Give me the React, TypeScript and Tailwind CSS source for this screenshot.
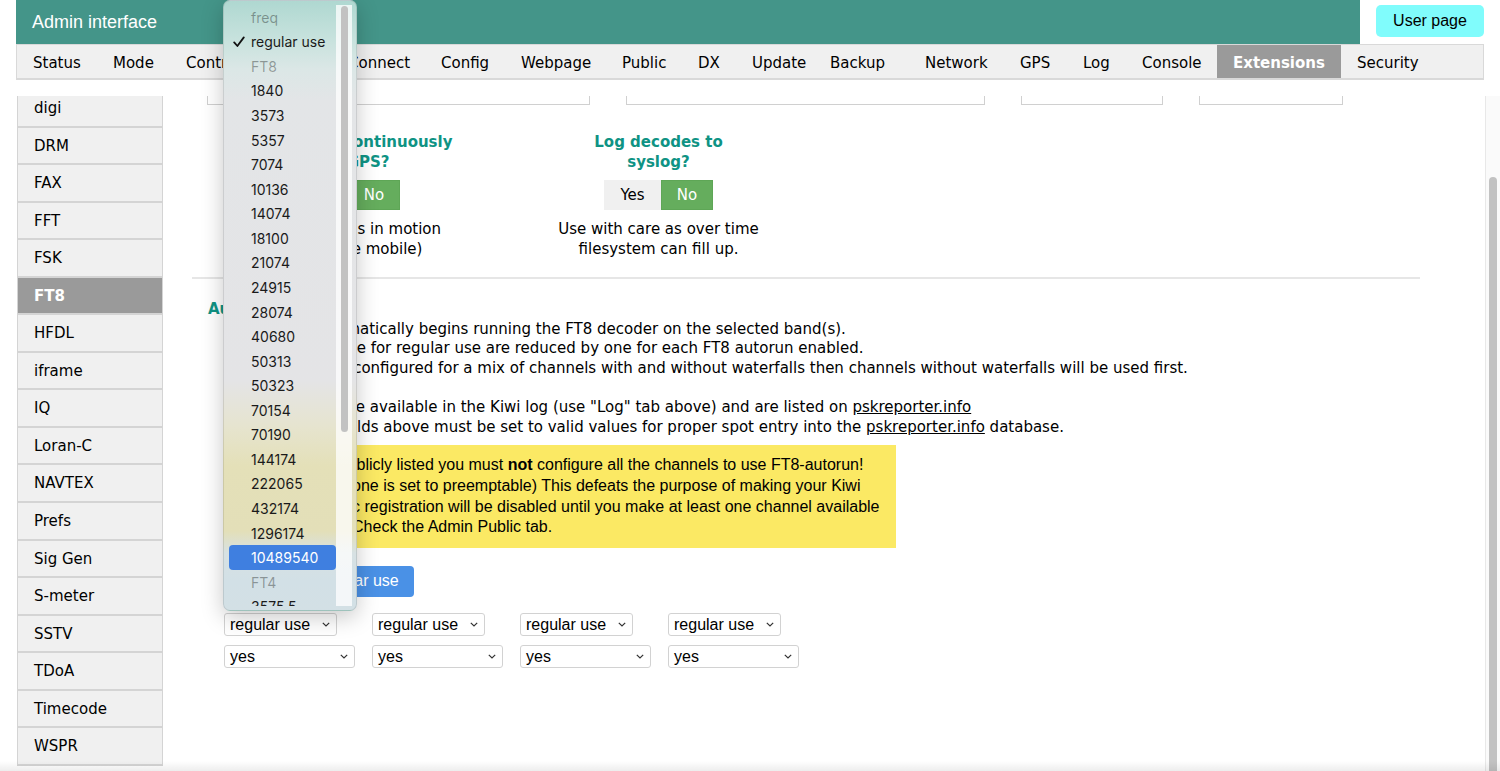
import React from 'react';

const tabs = [
  { label: 'Status', w: 80 },
  { label: 'Mode', w: 73 },
  { label: 'Control', w: 87 },
  { label: 'Users', w: 75 },
  { label: 'Connect', w: 93 },
  { label: 'Config', w: 80 },
  { label: 'Webpage', w: 101 },
  { label: 'Public', w: 76 },
  { label: 'DX', w: 54 },
  { label: 'Update', w: 78 },
  { label: 'Backup', w: 95 },
  { label: 'Network', w: 95 },
  { label: 'GPS', w: 63 },
  { label: 'Log', w: 59 },
  { label: 'Console', w: 91 },
  { label: 'Extensions', w: 124, active: true },
  { label: 'Security', w: 0 },
];

const extensions = [
  'digi', 'DRM', 'FAX', 'FFT', 'FSK', 'FT8', 'HFDL', 'iframe', 'IQ', 'Loran-C',
  'NAVTEX', 'Prefs', 'Sig Gen', 'S-meter', 'SSTV', 'TDoA', 'Timecode', 'WSPR',
];

const ft8Freqs = [
  '1840', '3573', '5357', '7074', '10136', '14074', '18100', '21074', '24915', '28074',
  '40680', '50313', '50323', '70154', '70190', '144174', '222065', '432174', '1296174', '10489540',
];

type Opt = { label: string; group?: boolean; checked?: boolean; selected?: boolean };

const options: Opt[] = [
  { label: 'freq', group: true },
  { label: 'regular use', checked: true },
  { label: 'FT8', group: true },
  ...ft8Freqs.map((f) => ({ label: f, selected: f === '10489540' })),
  { label: 'FT4', group: true },
  { label: '3575.5' },
];

function Chevron() {
  return (
    <svg width="8" height="5" viewBox="0 0 8 5" className="shrink-0">
      <path d="M0.8 0.8 L4 4 L7.2 0.8" fill="none" stroke="#333" strokeWidth="1.2" />
    </svg>
  );
}

function FakeSelect({ value, width }: { value: string; width: string }) {
  return (
    <div className={`${width} flex h-[23px] items-center justify-between rounded-[3px] border border-[#d2d2d2] bg-white pl-[5px] pr-[6px] pt-[1px] text-[16px]`}>
      <span>{value}</span>
      <Chevron />
    </div>
  );
}

function YesNo() {
  return (
    <div className="mt-[8px] flex">
      <div className="flex h-[30px] w-[57px] items-center justify-center bg-[#f0f0f0]">Yes</div>
      <div className="flex h-[30px] w-[52px] items-center justify-center border border-[#5ea656] bg-[#65ad5d] text-white">No</div>
    </div>
  );
}

export default function App() {
  return (
    <div className="relative h-[771px] w-[1500px] overflow-hidden bg-white font-['DejaVu_Sans',sans-serif] text-[15px] text-black">
      {/* header */}
      <div className="flex h-[44px] px-4">
        <div className="flex flex-1 items-center bg-[#449589] pl-4 font-['Liberation_Sans',Arial,sans-serif] text-[18px] text-white">
          Admin interface
        </div>
        <div className="ml-4 pt-[5px]">
          <div className="flex h-[32px] w-[108px] items-center justify-center rounded-[5px] bg-[#80fcfc] font-['Liberation_Sans',Arial,sans-serif] text-[16px]">
            User page
          </div>
        </div>
      </div>

      {/* tabs */}
      <div className="mx-4 flex h-[36px] border border-b-2 border-[#d9d9d9] bg-[#f0f0f0]">
        {tabs.map((t) => (
          <div
            key={t.label}
            style={t.w ? { width: t.w } : undefined}
            className={`flex shrink-0 items-center pl-4 pt-[3px] ${t.active ? 'bg-[#9a9a9a] font-bold text-white' : ''}`}
          >
            {t.label}
          </div>
        ))}
      </div>

      {/* body */}
      <div className="mt-4 flex h-[675px] overflow-hidden">
        <div className="-mt-[6px] ml-[17px] w-[146px] shrink-0">
          {extensions.map((e) => (
            <div
              key={e}
              className={`flex h-[37.55px] items-center border-x border-b-2 border-[#d4d4d4] pl-4 pt-[1px] ${e === 'FT8' ? 'bg-[#9a9a9a] font-bold text-white' : 'bg-[#f0f0f0]'}`}
            >
              {e}
            </div>
          ))}
        </div>

        <div className="ml-[29px] w-[1228px] shrink-0">
          {/* bottoms of the inputs above */}
          <div className="flex h-[9px] gap-[36px] pl-[15px]">
            <div className="w-[383px] border-x border-b border-[#d0d0d0]" />
            <div className="w-[359px] border-x border-b border-[#d0d0d0]" />
            <div className="w-[142px] border-x border-b border-[#d0d0d0]" />
            <div className="w-[144px] border-x border-b border-[#d0d0d0]" />
          </div>

          <div className="mt-[27px] flex leading-[20px]">
            <div className="flex w-[311px] flex-col items-center pr-[4px] text-center">
              <div className="font-bold text-[#0f9384]">
                <div>Update grid continuously</div>
                <div>from GPS?</div>
              </div>
              <YesNo />
              <div className="mt-[9px]">
                <div>Useful for Kiwis in motion</div>
                <div>(e.g. vehicle mobile)</div>
              </div>
            </div>
            <div className="flex w-[311px] flex-col items-center text-center">
              <div className="font-bold text-[#0f9384]">
                <div>Log decodes to</div>
                <div>syslog?</div>
              </div>
              <YesNo />
              <div className="mt-[9px]">
                <div>Use with care as over time</div>
                <div>filesystem can fill up.</div>
              </div>
            </div>
          </div>

          <div className="mt-[18px] h-[2px] bg-[#e6e6e6]" />

          <div className="mt-[21px] pl-4 font-bold leading-[19.6px] text-[#0f9384]">Autorun</div>
          <div className="whitespace-nowrap pl-8 leading-[19.6px]">
            <div>This option automatically begins running the FT8 decoder on the selected band(s).</div>
            <div>Channels available for regular use are reduced by one for each FT8 autorun enabled.</div>
            <div>When the Kiwi is configured for a mix of channels with and without waterfalls then channels without waterfalls will be used first.</div>
            <div className="h-[19.6px]" />
            <div>
              Decode results are available in the Kiwi log (use "Log" tab above) and are listed on <span className="underline">pskreporter.info</span>
            </div>
            <div>
              Callsign &amp; grid fields above must be set to valid values for proper spot entry into the <span className="underline">pskreporter.info</span> database.
            </div>
          </div>

          <div className="mt-[8px] ml-8 w-[672px] whitespace-nowrap bg-[#fbe964] px-4 py-[10px] font-['Liberation_Sans',Arial,sans-serif] text-[16px] leading-[20.67px]">
            <div>
              If your Kiwi is publicly listed you must <b>not</b> configure all the channels to use FT8-autorun!
            </div>
            <div>(unless at least one is set to preemptable) This defeats the purpose of making your Kiwi</div>
            <div>available.&nbsp; Public registration will be disabled until you make at least one channel available</div>
            <div>for regular use. Check the Admin Public tab.</div>
          </div>

          <div className="mt-[18px] ml-8 flex">
            <div className="flex h-[31px] items-center rounded-[4px] bg-[#4a91e6] pl-[28px] pr-[15px] font-['Liberation_Sans',Arial,sans-serif] text-[16px] text-white">
              Set all to regular use
            </div>
          </div>

          <div className="mt-[16px] ml-8 font-['Liberation_Sans',Arial,sans-serif]">
            <div className="flex">
              {[0, 1, 2, 3].map((i) => (
                <div key={i} className="w-[148px]">
                  <FakeSelect value="regular use" width="w-[113px]" />
                </div>
              ))}
            </div>
            <div className="mt-[9px] flex">
              {[0, 1, 2, 3].map((i) => (
                <div key={i} className="w-[148px]">
                  <FakeSelect value="yes" width="w-[131px]" />
                </div>
              ))}
            </div>
          </div>
        </div>

        <div className="flex-1" />

        {/* page scrollbar */}
        <div className="-mt-[3px] w-[15px] shrink-0 border-l border-[#e8e8e8] bg-[#fafafa]">
          <div className="mx-auto mt-[84px] h-[700px] w-[8px] rounded-full bg-[#c2c2c2]" />
        </div>
      </div>

      {/* bottom window shadow */}
      <div className="pointer-events-none absolute bottom-0 left-0 right-0 h-[10px] bg-linear-to-b from-transparent to-black/[0.07]" />

      {/* open select menu */}
      <div className="absolute left-[223px] top-0 flex h-[611px] w-[134px] rounded-[7px] border border-black/10 bg-[linear-gradient(180deg,#afd8d1_0px,#c7e2dd_38px,#dbe7e6_68px,#e3e5e7_100px,#e4e4e6_380px,#e6e4cf_425px,#e4e0b8_465px,#e3dfb8_530px,#d7e1e3_552px,#d2e0e6_580px,#d3e0e5_611px)] py-[4px] font-['Inter',sans-serif] text-[14px] shadow-[0_6px_22px_rgba(0,0,0,0.22)]">
        <div className="flex-1 overflow-hidden pl-[5px]">
          {options.map((o) => (
            <div
              key={o.label}
              className={`relative flex h-[24.57px] items-center rounded-[4px] pl-[22px] ${o.selected ? 'bg-[#3f7fe0] text-white' : o.group ? 'text-black/35' : 'text-[#1a1a1a]'}`}
            >
              {o.checked && (
                <svg width="12" height="12" viewBox="0 0 12 12" className="absolute left-[4px] top-[6px]">
                  <path d="M1.2 6.4 L4.4 10 L10.8 1.4" fill="none" stroke="#111" strokeWidth="1.8" strokeLinecap="round" strokeLinejoin="round" />
                </svg>
              )}
              {o.label}
            </div>
          ))}
        </div>
        <div className="mr-[4px] w-[16px] bg-white/75">
          <div className="mx-auto mt-[1px] h-[426px] w-[7px] rounded-full bg-[#c2c2c2]" />
        </div>
      </div>
    </div>
  );
}
